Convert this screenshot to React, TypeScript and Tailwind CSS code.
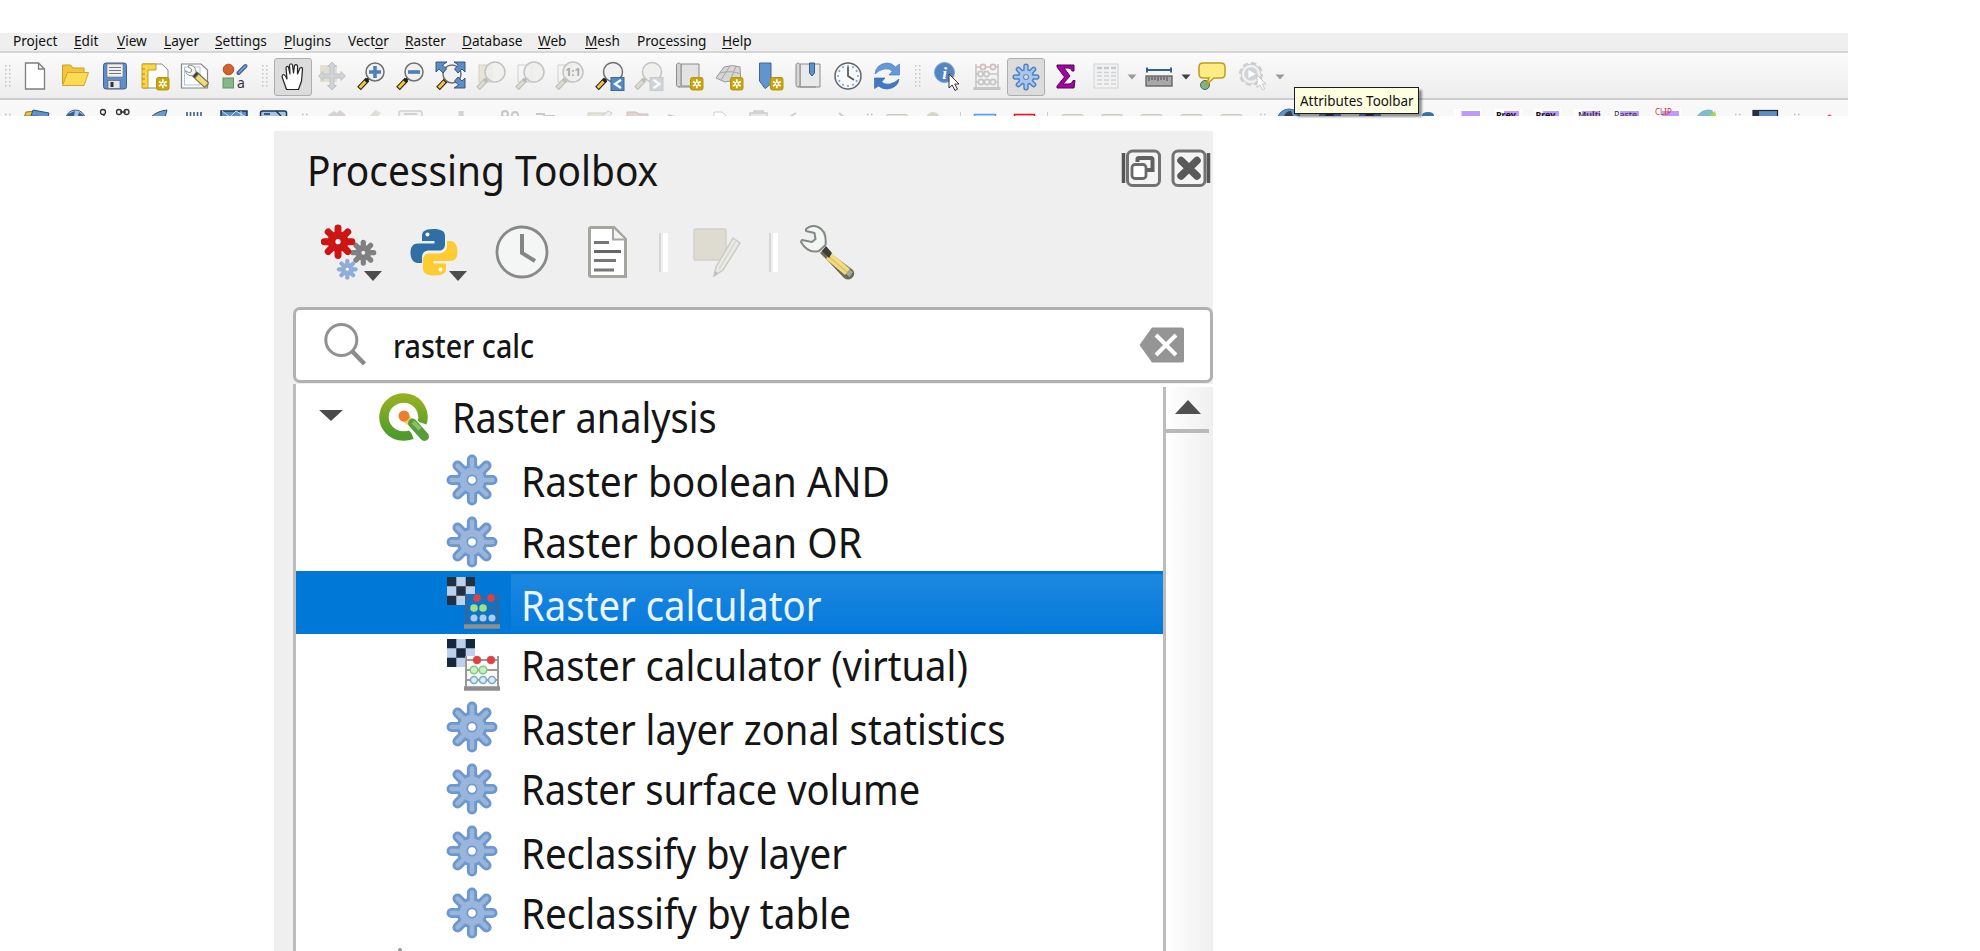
import type { ReactNode } from "react";

const FONT = "font-['Noto_Sans','Open_Sans',sans-serif]";

/* ---------- shared glyphs ---------- */

function Gear({ cx = 0, cy = 0, r, fill, line, hole = "#fff", lw = 2 }: { cx?: number; cy?: number; r: number; fill: string; line: string; hole?: string; lw?: number }) {
  const angles = [0, 45, 90, 135];
  const tooth = r * 0.4;
  const teeth = (color: string, w: number, len: number) =>
    angles.map((a) => (
      <line key={a} x1={-len} x2={len} y1="0" y2="0" stroke={color} strokeWidth={w} strokeLinecap="round" transform={`rotate(${a})`} />
    ));
  return (
    <g transform={`translate(${cx} ${cy})`}>
      {teeth(line, tooth, r - tooth / 2)}
      <circle r={r * 0.6} fill={line} />
      {teeth(fill, Math.max(tooth - lw * 2, 0.6), r - tooth / 2)}
      <circle r={r * 0.6 - lw} fill={fill} />
      <circle r={r * 0.15 + lw * 0.6} fill={line} />
      <circle r={r * 0.15} fill={hole} />
    </g>
  );
}

function Wrench() {
  return (
    <g>
      <path d="M-3 -5 L12 9" stroke="#6b6647" strokeWidth="8.5" strokeLinecap="butt" />
      <path d="M0 -2 L11.4 8.4" stroke="#f2da74" strokeWidth="6" />
      <path d="M-4.5 -6.5 L-1 -3.2" stroke="#3a3a34" strokeWidth="6" />
      <path d="M9.5 11.5 L13.8 7" stroke="#8d8456" strokeWidth="2" />
      <path d="M-14 -9 C-13 -3 -8 -2 -4.5 -3.2 L-1.3 -6.8 C-1 -12 -4 -16 -10 -15.5 L-11 -13.5 L-6.8 -11 L-7 -7.5 L-10 -6.5 Z" fill="#f4f6f4" stroke="#7b817c" strokeWidth="1.1" />
    </g>
  );
}

const Badge = () => (
  <g>
    <rect x="1.5" y="1.5" width="12.5" height="12.5" rx="2" fill="#c8a50c" stroke="#b6950a" />
    <path d="M7.8 3.3v9M3.9 5.5l7.8 4.6M3.9 10.1l7.8-4.6" stroke="#fff" strokeWidth="1.7" />
    <circle cx="7.8" cy="7.8" r="1.1" fill="#c8a50c" />
  </g>
);

function Lens({ faded = false, cx = 3, cy = -4, r = 9 }: { faded?: boolean; cx?: number; cy?: number; r?: number }) {
  return (
    <g>
      <path d="M-13 12.5 L-4.5 3.5" stroke={faded ? "#bdbdb9" : "#1f1f1f"} strokeWidth="5" />
      <path d="M-12.3 11.8 L-6.5 5.6" stroke={faded ? "#dddbd0" : "#f5c83a"} strokeWidth="3" />
      <path d="M-5.5 4.5 L-2.5 1.5" stroke={faded ? "#bdbdb9" : "#1f1f1f"} strokeWidth="3" />
      <circle cx={cx} cy={cy} r={r} fill={faded ? "#efefed" : "#f1f1f1"} fillOpacity={faded ? 0.85 : 1} stroke={faded ? "#c3c3c1" : "#6f6f6f"} strokeWidth="1.5" />
    </g>
  );
}

function Abacus() {
  return (
    <g stroke="#c6c6c6" fill="none">
      <path d="M-11 -12V12M11 -12V12M-11 -9H11M-11 -2H11M-11 6H11" strokeWidth="1.6" />
      <path d="M-13.5 12.5H13.5" strokeWidth="3" />
      <g strokeWidth="1.6" fill="#f2f2f2">
        <circle cx="-4" cy="-9" r="2.6" stroke="#d2bcbc" /><circle cx="6" cy="-9" r="2.6" stroke="#d2bcbc" />
        <circle cx="-6.5" cy="-2" r="2.6" /><circle cx="-.5" cy="-2" r="2.6" />
        <circle cx="-6" cy="6" r="2.6" /><circle cx="0" cy="6" r="2.6" /><circle cx="6" cy="6" r="2.6" />
      </g>
    </g>
  );
}

const Page = () => <path d="M-9.5 -13H3.5L9.5 -7V13H-9.5Z M3.5 -13V-7H9.5" fill="#fff" stroke="#7d7d7d" strokeWidth="1.3" />;

/* ---------- main toolbar ---------- */

function Cell({ children, w = "w-10" }: { children: ReactNode; w?: string }) {
  return (
    <div className={`flex h-[45px] shrink-0 justify-center ${w}`}>
      <svg className="h-[45px] w-10 shrink-0" viewBox="-20 -23 40 45" fill="none">{children}</svg>
    </div>
  );
}

function Pressed({ children }: { children: ReactNode }) {
  return (
    <div className="mt-[5px] flex h-[38px] w-[38px] shrink-0 items-center justify-center rounded-[3px] border border-[#adadad] bg-[#dcdcdc]">
      <svg className="size-9 shrink-0" viewBox="-18 -18 36 36" fill="none">{children}</svg>
    </div>
  );
}

function Grip({ w }: { w: string }) {
  return (
    <div className={`flex h-[45px] shrink-0 items-center justify-center ${w}`}>
      <svg className="h-6 w-2" viewBox="0 0 8 24">
        {[1, 5, 9, 13, 17, 21].map((y) => (
          <g key={y} fill="#c2c2c2"><rect x="1" y={y} width="1.5" height="1.5" /><rect x="5" y={y} width="1.5" height="1.5" /></g>
        ))}
      </svg>
    </div>
  );
}

function Drop({ w, dark = false }: { w: string; dark?: boolean }) {
  return (
    <div className={`flex h-[45px] shrink-0 items-center justify-center ${w}`}>
      <svg className="mt-[3px] h-[6px] w-[10px]" viewBox="0 0 10 6"><path d="M0.5 0.5H9.5L5 5.5Z" fill={dark ? "#3f3f3f" : "#9a9a9a"} /></svg>
    </div>
  );
}

const fileIcons: ReactNode[] = [
  <Page />,
  <>
    <path d="M-12.5 8V-11H-4.5L-2 -8H9V-3" fill="#f2c63c" stroke="#c89d22" />
    <path d="M-12.5 9.5L-7.5 -3.5H13.5L9 9.5Z" fill="#fddb55" stroke="#d0a52a" />
  </>,
  <>
    <rect x="-11.5" y="-13" width="23" height="26" rx="2.5" fill="#5f8fca" stroke="#3f5f8c" />
    <rect x="-8" y="-12" width="16" height="13" fill="#efefef" stroke="#707070" strokeWidth=".6" />
    <path d="M-6 -8.5H6M-6 -5.5H6M-6 -2.5H6" stroke="#777" />
    <rect x="-7" y="4.5" width="12" height="8" fill="#e6e6e6" stroke="#555" strokeWidth=".6" />
    <rect x="-4.5" y="6" width="3" height="5" fill="#333" />
  </>,
  <>
    <path d="M-12 -12H7L13 -6V12H-12Z" fill="#fff" stroke="#8c8c8c" />
    <path d="M-13 -12H1V-6H-7V12H-13Z" fill="#f9d648" stroke="#c19f1d" />
    <path d="M-13 -7h3M-13 -2h3M-13 3h3M-13 8h3" stroke="#a78811" />
    <Badge />
  </>,
  <>
    <path d="M-13.5 -12H6L12.5 -6V12H-13.5Z" fill="#fff" stroke="#848484" strokeWidth="1.2" />
    <path d="M-10.5 -9H5V9H-10.5Z" stroke="#a9c2ea" />
    <g transform="translate(2 2) scale(.82)"><Wrench /></g>
  </>,
  <>
    <circle cx="-6.5" cy="-6.5" r="5.3" fill="#d3622f" stroke="#a84a20" />
    <path d="M3.5 -3L10.5 -10" stroke="#3e5c86" strokeWidth="4" strokeLinecap="round" />
    <path d="M4 -3.5L10.5 -10" stroke="#6c9bd2" strokeWidth="2" strokeLinecap="round" />
    <rect x="-12" y="2" width="10.5" height="10" fill="#88b68a" stroke="#5f9663" />
    <text x="2" y="11.5" fontSize="14" fill="#333" fontFamily="Noto Sans, sans-serif">a</text>
  </>,
];

const arrowNE = "M3 -14H14V-4L11 -7L7 -3L3.5 -7L7.5 -11Z";

const mapIcons: ReactNode[] = [
  <>
    <rect x="-12" y="-11" width="17" height="17" fill="#e2dfd2" />
    <path d="M0 -14L4.5 -9.5H2V-2H9V-4.5L13.5 0L9 4.5V2H2V9.5H4.5L0 14L-4.5 9.5H-2V2H-9V4.5L-13.5 0L-9 -4.5V-2H-2V-9.5H-4.5Z" fill="#d0d3d6" stroke="#bfc2c4" />
  </>,
  <><Lens /><path d="M3 -10V2M-3 -4H9" stroke="#4e7fb9" strokeWidth="3.6" /></>,
  <><Lens /><path d="M-3 -4H9" stroke="#4e7fb9" strokeWidth="3.6" /></>,
  <>
    <Lens cx={1} cy={-2} r={9} />
    <g fill="#5d8dc6" stroke="#2f4a70" strokeWidth=".9">
      <path d={arrowNE} />
      <path d={arrowNE} transform="translate(-1 0) scale(-1 1)" />
      <path d={arrowNE} transform="translate(0 -2) scale(1 -1)" />
    </g>
  </>,
  <><rect x="-12" y="-11" width="13" height="17" fill="#e7e4d8" stroke="#d3d0c3" /><Lens faded cx={4} r={10} /></>,
  <><path d="M-12 -11H2V6H-12Z" stroke="#cfcfcf" /><Lens faded cx={4} r={10} /></>,
  <>
    <path d="M-12 -11H2V6H-12Z" stroke="#cfcfcf" />
    <Lens faded cx={3} r={10} />
    <text x="3" y="0" textAnchor="middle" fontSize="11" fontWeight="700" fill="#a9a9a9" fontFamily="Noto Sans, sans-serif">1:1</text>
  </>,
  <>
    <Lens cx={3} r={9.5} />
    <rect x="1" y="1.5" width="13" height="13" fill="#5589c4" stroke="#3c679c" /><path d="M11 3.8L5 8L11 12" stroke="#fff" strokeWidth="2.2" />
  </>,
  <>
    <Lens faded cx={3} r={9.5} />
    <rect x="1" y="1.5" width="13" height="13" fill="#cfd4d9" stroke="#c3c8cc" /><path d="M4.5 3.8L10.5 8L4.5 12" stroke="#fff" strokeWidth="2.2" />
  </>,
  <>
    <path d="M-8 -12H10V10H-8Z" fill="#e3e3e3" stroke="#8a8a8a" /><path d="M-12.5 -11C-12.5 -13.5 -8 -13.5 -8 -11V8C-8 12 -13 12 -12.5 8ZM-10 11H8" fill="#d2d2d2" stroke="#8a8a8a" />
    <Badge />
  </>,
  <>
    <path d="M-13 2L-5 -9Q4 -12 11 -9L12 7Q2 4 -4 6Z" fill="#d6d6d6" stroke="#999" />
    <path d="M-8 4L1 -10M1 5L7 -10M-9 -3Q2 -6 12 -2" stroke="#a6a6a6" />
    <Badge />
  </>,
  <g transform="translate(1 0)"><path d="M-9.5 -13H2V8L-4 12.5L-9.5 5Z" fill="#6394cd" stroke="#44648f" /><Badge /></g>,
  <>
    <path d="M-8 -12H12V11H-8Z" fill="#e9e9e9" stroke="#8a8a8a" /><path d="M-12 -11C-12 -13.5 -8 -13.5 -8 -11V8C-8 12 -12.5 12 -12 8ZM-10 11H8" fill="#d6d6d6" stroke="#8a8a8a" />
    <path d="M1.5 -13H6.5V-3L4 0L1.5 -3Z" fill="#5e90ca" stroke="#3b5d8b" />
  </>,
  <>
    <circle r="13" fill="#f8fafc" stroke="#666" strokeWidth="1.5" />
    {[0, 30, 60, 90, 120, 150, 180, 210, 240, 270, 300, 330].map((a) => <path key={a} d="M0 -11V-9" stroke="#70a0dc" strokeWidth="1.6" transform={`rotate(${a})`} />)}
    <path d="M0 -9V0L6 4" stroke="#555" strokeWidth="1.7" />
  </>,
  <>
    <path d="M-12 -2Q-11 -12 0 -13Q5 -13 8.500 -9L12.500 -12V-1H2L5.500 -5Q2 -8 -3 -7Q-8 -6 -12 -2Z" fill="#6598d6" stroke="#4a7dbd" strokeWidth=".7" />
    <path d="M12 3Q11 12 0 13Q-5 13 -8.500 10L-12.500 12.500V2H-2L-5.500 6Q-2 9 3 8Q8 7 12 3Z" fill="#3f79c3" stroke="#3a6caf" strokeWidth=".7" />
  </>,
];

const cursor = "M0 0V14L3.200 11L6 16.500L8.500 15.200L5.800 10H10Z";

function MainToolbar() {
  return (
    <div className="flex h-[47px] items-start border-b-2 border-[#cdcdcd] bg-linear-to-b from-[#fbfbfb] to-[#ededed]">
      <Grip w="w-[15px]" />
      {fileIcons.map((icon, i) => <Cell key={i}>{icon}</Cell>)}
      <Grip w="w-[19px]" />
      <Pressed>
        <path d="M-6.500 12.500L-10 2.500Q-12 -2 -9.500 -2.500Q-8 -2.500 -6 2L-7 -9Q-6.500 -11.500 -4.500 -10L-3 -3L-3.500 -12Q-2 -14.500 -.5 -12L.5 -4L1.500 -11.500Q3.500 -13.500 4.500 -11L4.500 -3L7 -9Q9.500 -10.500 9.500 -7.500L8.500 4L5.500 12.500Z" fill="#fff" stroke="#222" strokeWidth="1.2" strokeLinejoin="round" />
      </Pressed>
      {mapIcons.map((icon, i) => <Cell key={i} w="w-[39.700px]">{icon}</Cell>)}
      <Grip w="w-[21px]" />
      <Cell w="w-[39px]">
        <circle cx="-3.500" cy="-3.500" r="10" fill="#5585bd" stroke="#7fa5d3" />
        <text x="-3.500" y="2.500" textAnchor="middle" fontSize="17" fontWeight="700" fontStyle="italic" fill="#fff" fontFamily="Liberation Serif, serif">i</text>
        <path d={cursor} transform="translate(1 -2)" fill="#fff" stroke="#333" />
      </Cell>
      <Cell><Abacus /></Cell>
      <Pressed><Gear r={13.5} fill="#a9c6ec" line="#4b80c0" hole="#dcdcdc" lw={1.4} /></Pressed>
      <Cell w="w-[42px]">
        <path d="M-9 -11H8V-5H6Q5.500 -8 2 -8H-2L4 0L-3 8H3Q6 8 7 4.500H9L8 12H-9V10L-1.500 1L-9 -9Z" fill="#a800a8" stroke="#4a0d4a" />
      </Cell>
      <Cell w="w-[37px]">
        <rect x="-12" y="-12" width="24" height="24" fill="#f2f2f2" stroke="#cfd2d4" />
        <path d="M-9 -8H-4M-2 -8H3M5 -8H10" stroke="#c3cad0" strokeWidth="2.500" />
        <path d="M-9 -3.500H-4M-2 -3.500H3M5 -3.500H10M-9 0H-4M-2 0H3M5 0H10M-9 4H-4M-2 4H3M5 4H10M-9 8H-4M-2 8H3M5 8H10" stroke="#d0d3d6" strokeWidth="1.300" />
      </Cell>
      <Drop w="w-[15px]" />
      <Cell>
        <path d="M-12 -6H12M-12 -8.500V-3.500M12 -8.500V-3.500" stroke="#345f88" strokeWidth="2" />
        <rect x="-13" y="0" width="26" height="10" fill="#a8a8a8" stroke="#5f5f5f" strokeWidth="1.300" />
        <path d="M-10 1V5M-7 1V4M-4 1V4M-1 1V5M2 1V4M5 1V4M8 1V5" stroke="#444" />
      </Cell>
      <Drop w="w-[13px]" dark />
      <Cell>
        <circle cx="-7" cy="9" r="4.500" fill="#7cb487" stroke="#4c6b50" />
        <path d="M-9 -13H9Q13 -13 13 -9V-2Q13 2 9 2H2L-6 9L-3 2H-9Q-13 2 -13 -2V-9Q-13 -13 -9 -13Z" fill="#fbec86" stroke="#bf9c1c" strokeWidth="1.500" />
      </Cell>
      <Cell w="w-[41px]">
        <circle cx="-2" cy="-2" r="10.500" fill="#f1f1f1" stroke="#cdcdcd" strokeWidth="3" strokeDasharray="5.200 3" />
        <circle cx="-2" cy="-2" r="9.800" fill="#f1f1f1" stroke="#d0d0d0" strokeWidth="1.200" />
        <circle cx="-2" cy="-2" r="6.800" fill="#d0d4d9" /><path d="M-4.500 -6V2L2.500 -2Z" fill="#fff" />
        <path d={cursor} transform="translate(4 -1) scale(.9)" fill="#fff" stroke="#c2c2c2" />
      </Cell>
      <Drop w="w-[14px]" />
    </div>
  );
}

/* ---------- lower toolbar, only its top edge is visible ---------- */

function Strip({ w, box, children }: { w: string; box: string; children: ReactNode }) {
  return <svg className={`h-4 shrink-0 ${w}`} viewBox={box} fill="none">{children}</svg>;
}

const Dots = ({ x }: { x: number }) => <path d={`M${x - 3} 14.500h1.500M${x + 1} 14.500h1.500`} stroke="#bdbdbd" strokeWidth="1.500" />;

function LowerToolbar() {
  return (
    <div className="flex h-4 overflow-hidden bg-[#f8f8f8]">
      <Strip w="w-[298px]" box="0 0 298 16">
        <Dots x={8} />
        <path d="M24.500 16L26 12L36 11V16Z" fill="#efc231" stroke="#9a7d1d" />
        <path d="M31 16L33 10L49 13L48 17Z" fill="#5f92cb" stroke="#2f4f78" />
        <circle cx="75.500" cy="20" r="10" fill="#a9c4e4" stroke="#3c5f8a" /><path d="M68 14L75 11L74 16H67ZM79 12L84 16H78Z" fill="#355f91" />
        <circle cx="103" cy="12" r="2.500" stroke="#333" strokeWidth="1.300" /><path d="M104 14V17M120 12H126" stroke="#333" strokeWidth="1.300" />
        <circle cx="119" cy="12" r="2.500" stroke="#333" strokeWidth="1.300" /><circle cx="126.500" cy="12" r="2.500" stroke="#333" strokeWidth="1.300" />
        <path d="M151 17Q157 11 167 10L165 17Z" fill="#6d9ccd" stroke="#2f4f78" />
        <path d="M187 12V16M190.500 12V16M194 12V16M197.500 12V16M201 12V16" stroke="#3a5f8c" strokeWidth="1.600" />
        <rect x="221" y="11" width="26" height="8" fill="#5d8fc8" stroke="#1d3554" strokeWidth="1.500" /><path d="M222 11L230 17L236 11L246 17M241 11V17" stroke="#cfe0f2" />
        <rect x="260.500" y="11" width="26" height="8" rx="2" fill="#a7c4e6" stroke="#1d3554" strokeWidth="1.500" /><path d="M264 14H270M276 11L281 16" stroke="#1d3554" strokeWidth="1.500" />
      </Strip>
      <Strip w="w-[565px]" box="298 0 565 16">
        <Dots x={305} />
        <path d="M328 15L334 11L337 13L340 10L346 15L343 17H330Z" fill="#d8d2cf" />
        <path d="M369 17L375 10L381 13L377 17Z" fill="#dfddd6" />
        <rect x="399" y="11" width="23" height="8" rx="2" fill="#f3f3f3" stroke="#cfcfcf" strokeWidth="1.500" /><path d="M404 14H417" stroke="#d0d0d0" strokeWidth="2" />
        <path d="M461 11V17" stroke="#d3d3d3" strokeWidth="5" />
        <circle cx="505" cy="14" r="3" stroke="#c6c6c6" strokeWidth="2" /><circle cx="515" cy="15" r="3" stroke="#c9c9c9" strokeWidth="2" />
        <path d="M536 14H544V16H555" stroke="#cbcbcb" strokeWidth="2" />
        <path d="M588 17V13H608V17" fill="#e6e4d9" stroke="#cfcdc2" /><path d="M601 17L608 11L612 13L609 17" fill="#eee" stroke="#ccc" />
        <path d="M627 17V12H636L639 14H648V17" fill="#e2d2d0" stroke="#d2bebc" />
        <path d="M668 15L675 17" stroke="#ccc" strokeWidth="2" />
        <path d="M714 17V12H722L728 17" fill="#fff" stroke="#d0d0d0" />
        <path d="M750 17V13H767V17M754 13V11H763V13" fill="#e8e8e8" stroke="#ccc" strokeWidth="1.500" />
        <path d="M791 16L796 13M839 13L844 17" stroke="#d3cfc4" strokeWidth="2" />
      </Strip>
      <Strip w="w-[393px]" box="863 0 393 16">
        <Dots x={870} />
        <rect x="886.500" y="14.500" width="21" height="6" rx="1.500" fill="#e6e4da" stroke="#cccabf" />
        <circle cx="933" cy="19" r="7" fill="#d8d6cb" />
        <path d="M960.500 12V16M1047.500 12V16" stroke="#cfcfcf" />
        <rect x="974.500" y="14.500" width="21" height="6" fill="#cfe2fb" stroke="#5c9cf0" strokeWidth="1.500" />
        <rect x="1014.500" y="14.500" width="20" height="6" fill="#fbd3d3" stroke="#e3161b" strokeWidth="1.500" />
        {[1062, 1101.5, 1141, 1181, 1221].map((x) => <rect key={x} x={x} y="14.500" width="21" height="6" rx="1.500" fill="#e3e1d7" stroke="#cccabf" />)}
      </Strip>
      <Strip w="w-[592px]" box="1256 0 592 16">
        <Dots x={1263} />
        {[1289, 1330, 1370].map((x) => (
          <g key={x}><circle cx={x} cy="21" r="12" fill="#5f93d0" stroke="#3d6ca8" /><path d={`M${x - 5} 16Q${x - 3} 11 ${x + 2} 11L${x + 4} 16Z`} fill="#33414f" /></g>
        ))}
        <path d="M1422 16Q1422 12 1428 12Q1434 12 1434 16Z" fill="#3572a5" />
        {[1454, 1495, 1534, 1574, 1613, 1654].map((x) => <rect key={x} x={x} y="9" width="27" height="8" fill="#fff" />)}
        <path d="M1461.500 11H1480V17H1461.500ZM1504 11H1519V17H1504ZM1543 11H1559V17H1543ZM1582 11H1600V17H1582ZM1620 11H1639V17H1620ZM1662 11H1679V17H1662Z" fill="#bd9bff" />
        <g fontFamily="Noto Sans, sans-serif" fontSize="9">
          <text x="1496" y="18" fontWeight="700" fill="#111">Prev</text>
          <text x="1535.500" y="18" fontWeight="700" fill="#111">Prev</text>
          <text x="1578" y="18" fontWeight="600" fill="#333">Multi</text>
          <text x="1614" y="18" fill="#333">Paste</text>
          <text x="1655" y="15" fontSize="8" fill="#e8262a">CLIP</text>
        </g>
        <path d="M1697 16Q1703 8 1712 10L1716 17Z" fill="#82bcc4" /><path d="M1709 16L1715 11L1716.500 17Z" fill="#a6d84f" />
        <Dots x={1738} />
        <rect x="1753" y="10.500" width="24.500" height="8" fill="#5f8fc2" stroke="#223" strokeWidth="1.200" /><rect x="1753" y="10.500" width="6" height="8" fill="#27323f" />
        <Dots x={1797} />
        <path d="M1827 16Q1829.500 13 1832 16Z" fill="#e55" />
      </Strip>
    </div>
  );
}

/* ---------- menu bar ---------- */

const menus: { pre: string; key: string; post: string; w: string }[] = [
  { pre: "Project", key: "", post: "", w: "w-[61px]" },
  { pre: "", key: "E", post: "dit", w: "w-[43px]" },
  { pre: "", key: "V", post: "iew", w: "w-[47px]" },
  { pre: "", key: "L", post: "ayer", w: "w-[51px]" },
  { pre: "", key: "S", post: "ettings", w: "w-[69px]" },
  { pre: "", key: "P", post: "lugins", w: "w-[64px]" },
  { pre: "Vect", key: "o", post: "r", w: "w-[57px]" },
  { pre: "", key: "R", post: "aster", w: "w-[57px]" },
  { pre: "", key: "D", post: "atabase", w: "w-[76px]" },
  { pre: "", key: "W", post: "eb", w: "w-[47px]" },
  { pre: "", key: "M", post: "esh", w: "w-[52px]" },
  { pre: "Pro", key: "c", post: "essing", w: "w-[85px]" },
  { pre: "", key: "H", post: "elp", w: "w-[40px]" },
];

function MenuBar() {
  return (
    <nav className="flex h-5 border-b-2 border-[#d6d6d6] bg-[#efefef] pl-[12.500px] text-[14.500px] leading-[14px] text-[#111]">
      {menus.map((m) => (
        <div key={m.pre + m.key + m.post} className={`shrink-0 whitespace-nowrap ${m.w}`}>
          <span className="inline-block origin-left scale-x-[0.94]">
            {m.pre}<span className="underline decoration-1 underline-offset-2">{m.key}</span>{m.post}
          </span>
        </div>
      ))}
    </nav>
  );
}

/* ---------- processing toolbox ---------- */

function DropArrow() {
  return <svg className="absolute right-0 bottom-0 h-[10px] w-[18px]" viewBox="0 0 18 10"><path d="M0 0H18L9 10Z" fill="#4d4d4d" /></svg>;
}

const Separator = () => (
  <div className="flex h-[39px] w-[9px] justify-between">
    <div className="w-[2px] bg-[#d6d6d6]" />
    <div className="w-[5px] bg-white" />
  </div>
);

function PanelToolbar() {
  return (
    <div className="flex h-[58px] items-start pl-[47px]">
      <div className="relative h-[57px] w-[61px]">
        <svg className="size-full" viewBox="321 224 61 57">
          <Gear cx={363.3} cy={252.7} r={13} fill="#808080" line="#808080" hole="#efefef" lw={1} />
          <Gear cx={338} cy={241.7} r={17.3} fill="#cf1414" line="#cf1414" hole="#fff" lw={1} />
          <Gear cx={347.3} cy={269.3} r={10.5} fill="#8fadd9" line="#8fadd9" hole="#fff" lw={1} />
        </svg>
        <DropArrow />
      </div>
      <div className="relative ml-7 h-[57px] w-[57px]">
        <svg className="size-full" viewBox="410 224 57 57">
          <path d="M433.500 229C424 229 422 232 422 236V241H434.500V243.500H418C412 243.500 410.500 248 410.500 253C410.500 258 413 263 418 263H422V257C422 253 425 250.500 429 250.500H439C443 250.500 445 248 445 244V236C445 231 441 229 433.500 229Z" fill="#2f6fa5" />
          <path d="M434.500 275.500C444 275.500 446 272.500 446 268.500V263.500H433.500V261H450C456 261 457.500 256.500 457.500 251.500C457.500 246 455 241 450 241H447V246.500C447 250.500 443 253.500 439 253.500H429C425 253.500 423 256.500 423 260V268.500C423 273 427 275.500 434.500 275.500Z" fill="#fdcb32" />
          <circle cx="427.500" cy="234.500" r="2" fill="#fff" /><circle cx="440.500" cy="269.500" r="2" fill="#fff" />
        </svg>
        <DropArrow />
      </div>
      <svg className="ml-7 mt-px size-[54px]" viewBox="-27 -27 54 54" fill="none">
        <circle r="25" fill="#f3f6f5" stroke="#898989" strokeWidth="2.800" />
        <path d="M0 -18V1L13 9" stroke="#858585" strokeWidth="4" />
      </svg>
      <svg className="ml-[38px] mt-px h-[54px] w-[42px]" viewBox="0 0 42 54" fill="none">
        <path d="M4 2.500H27L38.500 14V51.500H4Q2.500 51.500 2.500 50V4Q2.500 2.500 4 2.500Z" fill="#fff" stroke="#a5a59f" strokeWidth="3" />
        <path d="M26 3V14.500H38" fill="#f4f4f2" stroke="#a5a59f" strokeWidth="2" />
        <path d="M7 17.500H22M7 35.500H29M7 45H27" stroke="#777" strokeWidth="3" /><path d="M7 26.500H34" stroke="#666" strokeWidth="3" />
      </svg>
      <div className="ml-[30px] mt-[9px]"><Separator /></div>
      <svg className="ml-[25px] mt-[4px] h-[50px] w-[48px]" viewBox="0 0 48 50">
        <rect x="1" y="1" width="32" height="31" rx="1.500" fill="#dedbd1" stroke="#d3d0c6" strokeWidth="1.500" />
        <path d="M21 48L23 39L40 10L47 15L30 42Z" fill="#ebebe6" stroke="#cbcbc5" strokeWidth="1.500" /><path d="M26 41L43 13" stroke="#dadad3" strokeWidth="2" />
        <path d="M21 48L22 43L25 45Z" fill="#bdbdb8" />
      </svg>
      <div className="ml-[28px] mt-[9px]"><Separator /></div>
      <svg className="ml-[22px] mt-0 size-[57px]" viewBox="0 0 57 57">
        <path d="M25 24L33 31L53 46Q56 50 52 54Q48 57 44 54L28 37L20 29Z" fill="#6c6a55" />
        <path d="M31 28.500L50 45L45 51L26 35Z" fill="#f3dc80" /><path d="M28 32L47 48" stroke="#d9c064" strokeWidth="1.500" />
        <path d="M22 27L29 34L32 29L26 22Z" fill="#3e3e3a" />
        <path d="M46 50L49.500 45.500L53 48L49.500 53Z" fill="#a7a79f" />
        <path d="M6 5Q11 .5 18 3Q27 7 25.500 21L19 27Q8 30 1 18L2 16L12 18L15.500 15L14.500 9L6 7Z" fill="#f4f6f4" stroke="#838985" strokeWidth="2" strokeLinejoin="round" />
      </svg>
    </div>
  );
}

function PanelTitle() {
  return (
    <div className="flex h-[93px] items-start justify-between pl-[33px]">
      <h1 className="pt-[9px] text-[42px] leading-[60px] whitespace-nowrap text-[#151515]">
        <span className="inline-block origin-left scale-x-[0.925]">Processing Toolbox</span>
      </h1>
      <svg className="mt-[18px] mr-[2px] h-10 w-[90px]" viewBox="1121 149 90 40" fill="none">
        <path d="M1123.500 153V183" stroke="#555" strokeWidth="3.500" />
        <rect x="1127.500" y="151" width="32" height="34.500" rx="5" fill="#f4f4f4" stroke="#727272" strokeWidth="3" />
        <path d="M1137.500 162V159Q1137.500 158 1139 158H1151Q1152.500 158 1152.500 160V170H1147" stroke="#606060" strokeWidth="4" />
        <rect x="1132" y="164.500" width="14" height="14" rx="3" fill="#fff" stroke="#6a6a6a" strokeWidth="2.800" />
        <path d="M1208.500 153V183" stroke="#555" strokeWidth="3.500" />
        <rect x="1173" y="151" width="32" height="34.500" rx="5" fill="#f4f4f4" stroke="#727272" strokeWidth="3" />
        <path d="M1181 160.500L1197 176M1197 160.500L1181 176" stroke="#5a5a5a" strokeWidth="7.500" strokeLinecap="round" />
      </svg>
    </div>
  );
}

function SearchBox() {
  return (
    <div className="ml-[19px] flex h-[76px] shrink-0 items-center rounded-[7px] border-[3px] border-[#b1b1b1] bg-white">
      <svg className="ml-7 h-[46px] w-[46px]" viewBox="324 323 46 46" fill="none">
        <circle cx="341.300" cy="341" r="15.500" stroke="#919191" strokeWidth="3" /><path d="M352 352L364.500 365" stroke="#8a8a8a" strokeWidth="4.500" />
      </svg>
      <div className="grow pt-[2px] pl-[23px] text-[32px] leading-[50px] font-medium whitespace-nowrap text-[#151515]">
        <span className="inline-block origin-left scale-x-[0.895]">raster calc</span>
      </div>
      <svg className="mr-[25px] h-[36px] w-[46px]" viewBox="0 0 46 36" fill="none">
        <path d="M13 .5H43Q45 .5 45 2V34Q45 35.500 43 35.500H13L.5 18Z" fill="#959595" /><path d="M17 8L37 28M37 8L17 28" stroke="#fff" strokeWidth="4" />
      </svg>
    </div>
  );
}

const GearIcon = () => (
  <svg className="-ml-px mt-px size-[52px]" viewBox="-26 -26 52 52"><Gear r={25.5} fill="#99b5db" line="#6d98cf" lw={2.8} /></svg>
);

function CalcIcon({ dark }: { dark?: boolean }) {
  const d = dark ? "#23303f" : "#17273c";
  const bar = dark ? "#3c6690" : "#999";
  return (
    <svg className="h-[52px] w-[53px]" viewBox="0 0 53 52" fill="none">
      <rect width="28" height="28" fill="#bdd1ec" />
      <path d="M0 0H9.300V9.300H0ZM18.700 0H28V9.300H18.700ZM9.300 9.300H18.700V18.700H9.300ZM0 18.700H9.300V28H0Z" fill={d} />
      {dark ? <path d="M18 17H52V51H18Z" fill="#0e74ca" /> : <path d="M18 17H52V51H18Z" fill="#fafafa" />}
      <path d="M19 17V50M51 17V50M19 21H51M19 31H51M19 41H51" stroke={bar} strokeWidth="2" />
      <path d="M17 49.500H53" stroke="#8f8f8f" strokeWidth="4.500" />
      <g fill="#e04040" stroke={dark ? "none" : "#d05050"}><circle cx="30" cy="21" r="3.800" /><circle cx="44" cy="21" r="3.800" /></g>
      <g fill={dark ? "#9fe083" : "#c9efc0"} stroke={dark ? "none" : "#86c886"} strokeWidth="1.500"><circle cx="27" cy="31" r="3.800" /><circle cx="36" cy="31" r="3.800" /></g>
      <g fill={dark ? "#a9cdec" : "#dcecf6"} stroke={dark ? "none" : "#7ba8c6"} strokeWidth="1.500"><circle cx="27" cy="41" r="3.500" /><circle cx="36" cy="41" r="3.500" /><circle cx="45" cy="41" r="3.500" /></g>
    </svg>
  );
}

type Row = { label: string; icon: "gear" | "calc"; h: string; pad: string; fit: string; selected?: boolean };

const rows: Row[] = [
  { label: "Raster boolean AND", icon: "gear", h: "h-16", pad: "pt-[3px]", fit: "scale-x-[0.927]" },
  { label: "Raster boolean OR", icon: "gear", h: "h-[60px]", pad: "pt-px", fit: "scale-x-[0.928]" },
  { label: "Raster calculator", icon: "calc", h: "h-[63px]", pad: "pt-[4px]", fit: "scale-x-[0.911]", selected: true },
  { label: "Raster calculator (virtual)", icon: "calc", h: "h-[61px]", pad: "pt-px", fit: "scale-x-[0.91]" },
  { label: "Raster layer zonal statistics", icon: "gear", h: "h-[63px]", pad: "pt-[4px]", fit: "scale-x-[0.91]" },
  { label: "Raster surface volume", icon: "gear", h: "h-[61px]", pad: "pt-px", fit: "scale-x-[0.908]" },
  { label: "Reclassify by layer", icon: "gear", h: "h-[63px]", pad: "pt-[4px]", fit: "scale-x-[0.915]" },
  { label: "Reclassify by table", icon: "gear", h: "h-[61px]", pad: "pt-px", fit: "scale-x-[0.92]" },
];

function TreeRow({ row }: { row: Row }) {
  return (
    <div className={`flex shrink-0 items-center pl-[151px] ${row.h} ${row.selected ? "bg-[#0078d7] text-[#eaf4ff]" : "text-[#151515]"}`}>
      <div className="flex w-[64px] shrink-0">{row.icon === "gear" ? <GearIcon /> : <CalcIcon dark={row.selected} />}</div>
      <div className={`flex grow items-center pl-[9.500px] text-[42px] leading-[58px] whitespace-nowrap ${row.pad} ${row.selected ? "h-[57px] bg-linear-to-b from-[#1c88e0] to-[#057adb]" : ""}`}>
        <span className={`inline-block origin-left ${row.fit}`}>{row.label}</span>
      </div>
    </div>
  );
}

function Tree() {
  return (
    <div className="ml-[19px] mt-px flex h-[567px] shrink-0 overflow-hidden border-l-[3px] border-[#bdbdbd] bg-white">
      <div className="flex w-[867px] shrink-0 flex-col">
        <div className="flex h-[63px] shrink-0 items-center pl-[22px]">
          <svg className="h-[11px] w-[26px]" viewBox="0 0 26 12"><path d="M0 0H26L13 12Z" fill="#4a4a4a" /></svg>
          <svg className="mt-[2px] ml-[35px] h-[48px] w-[50px]" viewBox="0 0 50 48" fill="none">
            <defs>
              <linearGradient id="ring" x1="0" y1="0" x2="0" y2="1"><stop offset="0" stopColor="#93b023" /><stop offset="1" stopColor="#4e9a2b" /></linearGradient>
            </defs>
            <path d="M33 41.500Q29 43 24.500 43A19.500 19 0 1 1 43 30" stroke="url(#ring)" strokeWidth="9.500" />
            <path d="M25 24L34 31" stroke="#f3d45e" strokeWidth="8" /><circle cx="25" cy="23" r="5.500" fill="#ee7c2b" />
            <path d="M33 31L45 44" stroke="#fff" strokeWidth="13" /><path d="M33.500 30L45.500 43.500" stroke="#5a9c3c" strokeWidth="9" strokeLinecap="round" /><path d="M34 29L41 36" stroke="#8bbf62" strokeWidth="4" />
          </svg>
          <div className="pt-[3px] pl-[23px] text-[42px] leading-[58px] whitespace-nowrap text-[#151515]">
            <span className="inline-block origin-left scale-x-[0.902]">Raster analysis</span>
          </div>
        </div>
        {rows.map((row) => <TreeRow key={row.label} row={row} />)}
        <div className="flex h-2 items-end pl-[102px]"><div className="h-[3px] w-1 rounded-t bg-[#999]" /></div>
      </div>
      <div className="mt-[3px] flex w-[50px] shrink-0 flex-col border-l-[3px] border-[#bcbcbc] bg-linear-to-r from-white to-[#efefef]">
        <div className="mr-[4px] flex h-[46px] items-center justify-center border-b-4 border-[#b9b9b9]">
          <svg className="mt-[-2px] h-[14px] w-[26px]" viewBox="0 0 26 14"><path d="M0 14H26L13 0Z" fill="#505050" /></svg>
        </div>
      </div>
    </div>
  );
}

export default function App() {
  return (
    <div className={`relative flex h-[951px] w-[1980px] flex-col overflow-hidden bg-white ${FONT}`}>
      <header className="mt-[33px] w-[1848px] shrink-0">
        <MenuBar />
        <MainToolbar />
        <LowerToolbar />
      </header>
      <section className="mt-[15px] ml-[274px] flex h-[820px] w-[939px] shrink-0 flex-col overflow-hidden bg-[#efefef]">
        <PanelTitle />
        <PanelToolbar />
        <div className="h-[25px] shrink-0" />
        <SearchBox />
        <Tree />
      </section>
      <div className="absolute top-[87px] left-[1294px] flex h-[27px] w-[125px] items-center border border-[#1c1c1c] bg-[#ffffe1] pl-[5px] text-[14.500px] whitespace-nowrap text-[#111] shadow-[3px_3px_2px_rgba(0,0,0,0.4)]">
        <span className="inline-block origin-left scale-x-[0.925]">Attributes Toolbar</span>
      </div>
    </div>
  );
}
